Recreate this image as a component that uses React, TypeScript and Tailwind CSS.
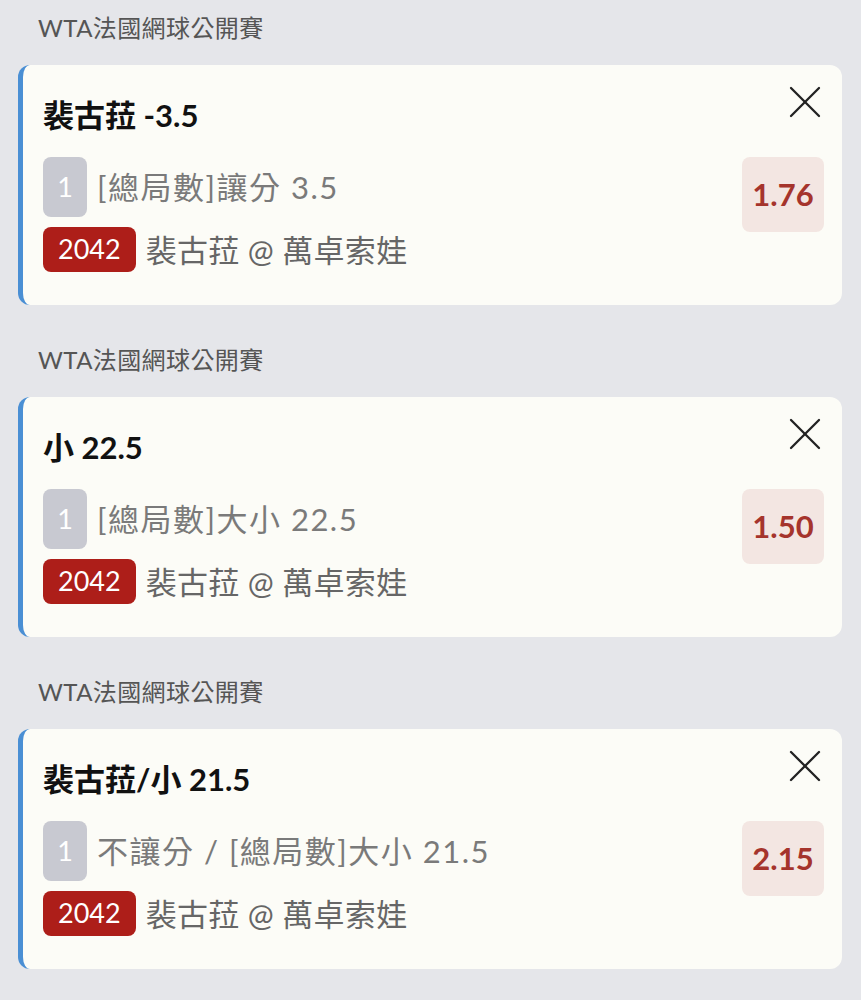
type Bet = {
  league: string;
  title: string;
  market: string;
  odds: string;
};

const bets: Bet[] = [
  { league: "WTA法國網球公開賽", title: "裴古菈 -3.5", market: "[總局數]讓分 3.5", odds: "1.76" },
  { league: "WTA法國網球公開賽", title: "小 22.5", market: "[總局數]大小 22.5", odds: "1.50" },
  { league: "WTA法國網球公開賽", title: "裴古菈/小 21.5", market: "不讓分 / [總局數]大小 21.5", odds: "2.15" },
];

const font = { fontFamily: '"Lato", "Noto Sans CJK TC", sans-serif' };

function CloseIcon() {
  return (
    <svg width="32" height="32" viewBox="0 0 32 32" className="mr-[3px]" fill="none" stroke="#222222" strokeWidth="2.3" strokeLinecap="round">
      <line x1="2" y1="2" x2="30" y2="30" />
      <line x1="30" y1="2" x2="2" y2="30" />
    </svg>
  );
}

function BetCard({ bet }: { bet: Bet }) {
  return (
    <section>
      <div className="pl-[38px] h-[30px] leading-[30px] text-[24px] tracking-[0.4px] text-[#555555]">{bet.league}</div>
      <div className="mt-[22px] mx-[18px] mr-[19px] h-[240px] flex rounded-xl border-l-[5px] border-[#4a8fd4] bg-[#fcfcf7]">
        <div className="flex-1 pl-[20px] pt-[32px]">
          <div className="h-[36px] leading-[36px] text-[31px] font-bold text-[#111111]">{bet.title}</div>
          <div className="mt-[24px] flex items-center gap-[10px]">
            <span className="w-[44px] h-[60px] rounded-lg bg-[#c8c9d1] text-white text-[27px] flex items-center justify-center">
              1
            </span>
            <span className="text-[31px] tracking-[1.5px] text-[#7a7a7a]">{bet.market}</span>
          </div>
          <div className="mt-[10px] flex items-center gap-[10px]">
            <span className="h-[45px] px-[15px] rounded-lg bg-[#ad1e19] text-white text-[27px] flex items-center">
              2042
            </span>
            <span className="text-[31px] tracking-[0.3px] text-[#666666] leading-[40px]">裴古菈 @ 萬卓索娃</span>
          </div>
        </div>
        <div className="flex flex-col items-end pt-[21px] pr-[18px]">
          <CloseIcon />
          <div className="mt-[39px] w-[82px] h-[75px] rounded-lg bg-[#f3e6e2] flex items-center justify-center text-[31px] font-bold text-[#a5342c]">
            {bet.odds}
          </div>
        </div>
      </div>
    </section>
  );
}

export default function App() {
  return (
    <div className="min-h-[1000px] bg-[#e5e6ea] pt-[13px] flex flex-col gap-[40px]" style={font}>
      {bets.map((b, i) => (
        <BetCard key={i} bet={b} />
      ))}
    </div>
  );
}
